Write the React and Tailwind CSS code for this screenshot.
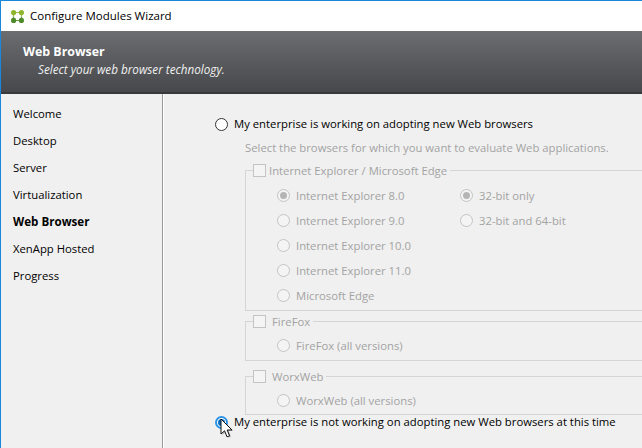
const NAV = ['Welcome', 'Desktop', 'Server', 'Virtualization', 'Web Browser', 'XenApp Hosted', 'Progress']

function Radio({ checked, label }) {
  return (
    <div className="flex items-center h-[25px] text-[#a3a3a3]">
      <span className="w-[13px] h-[13px] rounded-full border border-[#c4c4c4] bg-[#f4f4f4] flex items-center justify-center mr-[6px]">
        {checked && <span className="w-[7px] h-[7px] rounded-full bg-[#b5b5b5]" />}
      </span>
      {label}
    </div>
  )
}

function Group({ label, labelGap, height, children, first }) {
  return (
    <div className={`relative border border-r-0 border-[#d5d5d5] w-[420px] pl-[31px] ${first ? 'pt-[12px]' : 'pt-[11px]'}`} style={{ height }}>
      <div className="absolute left-[7px] top-[-7px] flex items-center h-[13px] bg-[#f0f0f0] pr-[3px] text-[#a3a3a3]">
        <span className="w-[13px] h-[13px] border border-[#c4c4c4] bg-[#f4f4f4]" style={{ marginRight: labelGap }} />
        {label}
      </div>
      {children}
    </div>
  )
}

function Logo() {
  return (
    <svg width="13" height="13" viewBox="0 0 13 13" className="mr-[6px]">
      <path d="M2.5 2.5h8M2.5 2.5v4M10.5 2.5v4" fill="none" stroke="#9cb84e" strokeWidth="1.2" />
      <path d="M2.5 10.5h8M2.5 6.5v4M10.5 6.5v4" fill="none" stroke="#6a9a45" strokeWidth="1.2" />
      <circle cx="2.6" cy="2.6" r="2.6" fill="#8fb52c" />
      <circle cx="10.4" cy="2.6" r="2.6" fill="#8fb52c" />
      <circle cx="2.6" cy="10.4" r="2.6" fill="#4f8a2b" />
      <circle cx="10.4" cy="10.4" r="2.6" fill="#4f8a2b" />
    </svg>
  )
}

export default function App() {
  return (
    <div className="w-[642px] h-[448px] overflow-hidden flex flex-col bg-[#f0f0f0] border-t border-l border-[#1887dc] text-[11.3px] leading-[16px] text-black font-['Open_Sans','Noto_Sans',sans-serif]">
      {/* title bar */}
      <div className="h-[30px] bg-white flex items-center pl-[10px] shrink-0">
        <Logo />
        <span className="text-[11.5px]">Configure Modules Wizard</span>
      </div>

      {/* header */}
      <div className="h-[63px] shrink-0 bg-gradient-to-b from-[#6b6d70] to-[#46484b] border-b-2 border-[#38393b] pl-[22px] pt-[12px] text-white">
        <div className="font-bold text-[12.4px] leading-[17px]">Web Browser</div>
        <div className="italic text-[11.7px] pl-[15px] pt-[1px] text-[#f0f0f0]">Select your web browser technology.</div>
      </div>

      <div className="flex flex-1 min-h-0">
        {/* side nav */}
        <div className="w-[161px] shrink-0 bg-[#f0f0f0] pl-[12px] pt-[6px]">
          {NAV.map((item) => (
            <div key={item} className={`h-[27px] flex items-center ${item === 'Web Browser' ? 'font-bold text-[11.6px]' : ''}`}>
              {item}
            </div>
          ))}
        </div>
        <div className="w-[1px] bg-[#9a9a9a] shrink-0" />
        <div className="w-[1px] bg-white shrink-0" />

        {/* options */}
        <div className="flex-1 min-w-0 pl-[51px] pt-[22px] overflow-hidden">
          <div className="flex items-center h-[16px]">
            <span className="w-[13px] h-[13px] rounded-full border border-[#333] bg-white mr-[6px]" />
            My enterprise is working on adopting new Web browsers
          </div>
          <div className="pl-[30px] pt-[8px]">
            <div className="h-[16px] text-[#a3a3a3]">Select the browsers for which you want to evaluate Web applications.</div>
            <div className="mt-[14px] flex flex-col">
              <Group first label="Internet Explorer / Microsoft Edge" labelGap={3} height={141}>
                <div className="flex">
                  <div className="w-[183px]">
                    <Radio checked label="Internet Explorer 8.0" />
                    <Radio label="Internet Explorer 9.0" />
                    <Radio label="Internet Explorer 10.0" />
                    <Radio label="Internet Explorer 11.0" />
                    <Radio label="Microsoft Edge" />
                  </div>
                  <div>
                    <Radio checked label="32-bit only" />
                    <Radio label="32-bit and 64-bit" />
                  </div>
                </div>
              </Group>
              <div className="mt-[10px]">
                <Group label="FireFox" labelGap={6} height={40}>
                  <Radio label="FireFox (all versions)" />
                </Group>
              </div>
              <div className="mt-[15px]">
                <Group label="WorxWeb" labelGap={6} height={39}>
                  <Radio label="WorxWeb (all versions)" />
                </Group>
              </div>
            </div>
          </div>
          <div className="relative flex items-center h-[16px] mt-[-1px]">
            <span className="w-[13px] h-[13px] rounded-full border-2 border-[#2b93e6] bg-white flex items-center justify-center mr-[6px]">
              <span className="w-[7px] h-[7px] rounded-full bg-[#0a6fc4]" />
            </span>
            My enterprise is not working on adopting new Web browsers at this time
            <svg width="16" height="22" viewBox="0 0 16 22" className="absolute left-[5px] top-[4px]">
              <path d="M2.5 2v15l3.6-3.2 2.4 6 2.6-1-2.4-5.8h4.8z" fill="#888" opacity="0.5" />
              <path d="M1 1v15l3.6-3.2 2.4 6 2.6-1-2.4-5.8h4.8z" fill="#fff" stroke="#111" strokeWidth="1" strokeLinejoin="round" />
            </svg>
          </div>
        </div>
      </div>
    </div>
  )
}
